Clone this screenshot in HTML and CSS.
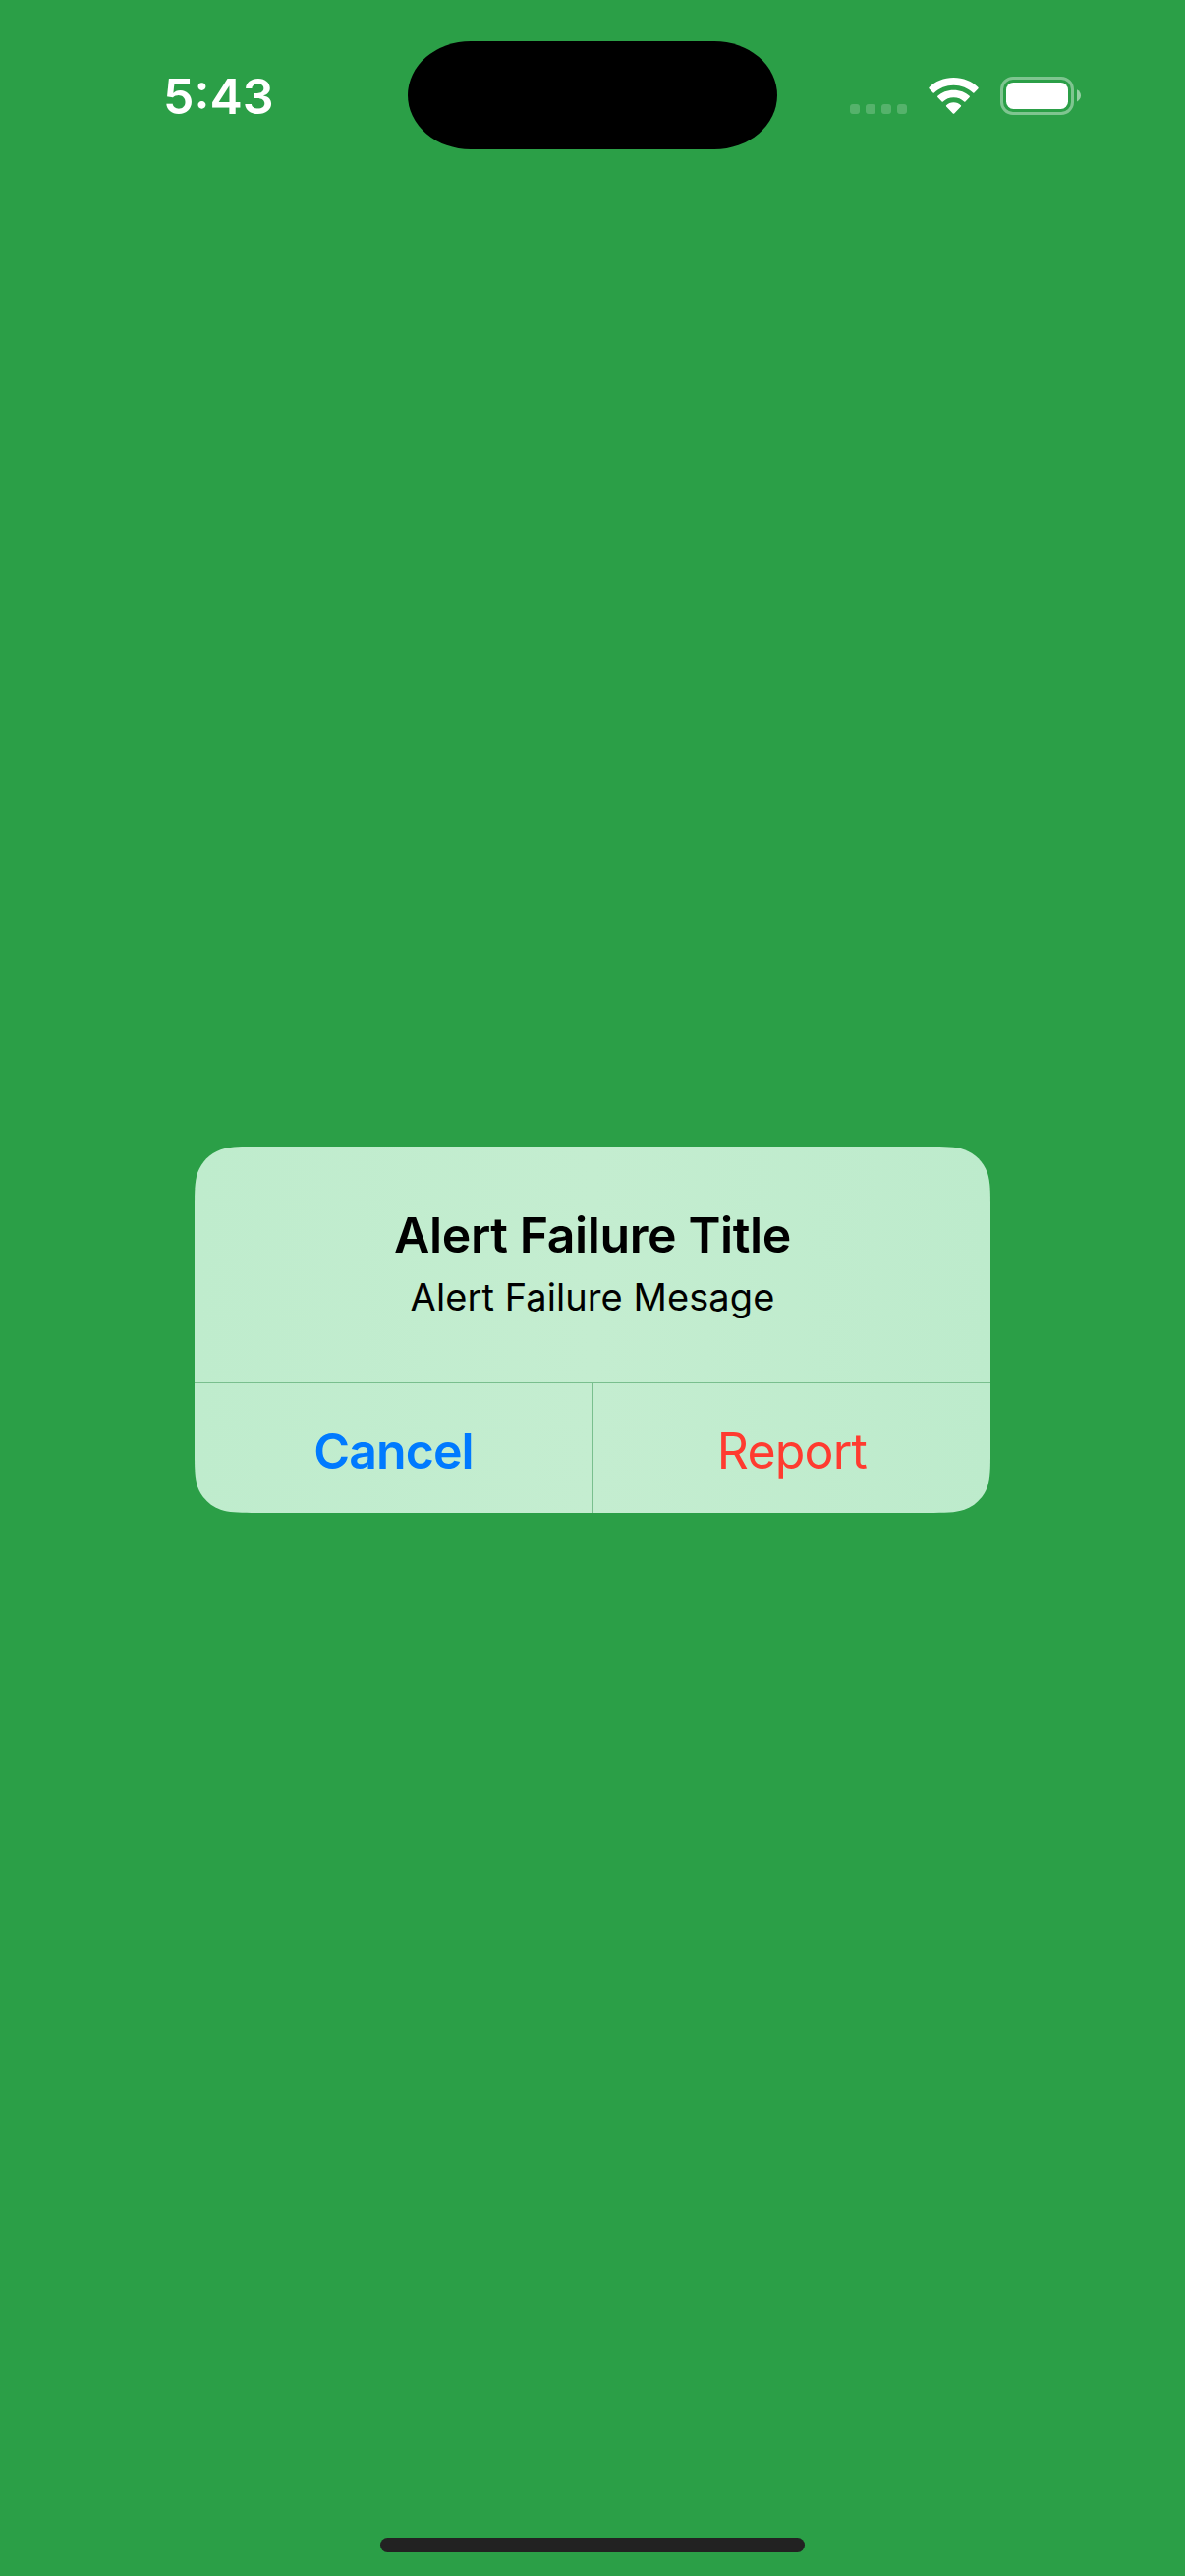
FILE: index.html
```html
<!DOCTYPE html>
<html lang="en">
<head>
<meta charset="utf-8">
<title>Alert</title>
<link rel="stylesheet" href="styles.css">
</head>
<body>
<div class="screen">
  <header class="status">
    <time class="clock">5:43</time>
    <div class="island"></div>
    <div class="indicators">
      <div class="signal"><i></i><i></i><i></i><i></i></div>
      <svg class="wifi" width="52" height="38" viewBox="0 0 52 38" fill="#fff">
        <path d="M25.500 0C35.400 0 44.300 3.800 50.500 10Q51 10.600 50.500 11.200L46.400 15.500Q45.800 16.100 45.200 15.500C40 10.700 33.100 7.700 25.500 7.700S11 10.700 5.800 15.500Q5.200 16.100 4.600 15.500L.5 11.200Q0 10.600 .5 10C6.700 3.800 15.600 0 25.500 0Z"/>
        <path d="M25.500 12.700C31.900 12.700 37.500 15 41.700 18.700Q42.300 19.300 41.700 19.900L37.400 24.400Q36.800 25 36.200 24.400C33.400 21.900 29.700 20.300 25.500 20.300S17.600 21.900 14.800 24.400Q14.200 25 13.600 24.400L9.300 19.900Q8.700 19.300 9.300 18.700C13.500 15 19.100 12.700 25.500 12.700Z"/>
        <path d="M25.500 25.300C28.400 25.300 31 26.400 32.900 28.200Q33.500 28.800 32.900 29.400L26.200 36.400Q25.500 37.100 24.800 36.400L18.100 29.400Q17.500 28.800 18.100 28.200C20 26.400 22.600 25.300 25.500 25.300Z"/>
      </svg>
      <svg class="battery" width="82" height="39" viewBox="0 0 82 39">
        <rect x="1.500" y="1.500" width="72" height="36" rx="11.500" fill="none" stroke="#fff" stroke-opacity=".4" stroke-width="3"/>
        <rect x="6" y="6" width="63" height="27" rx="7.500" fill="#fff"/>
        <path d="M78 13.200C80.500 14.300 82 16.700 82 19.300S80.500 24.300 78 25.400Z" fill="#fff" fill-opacity=".5"/>
      </svg>
    </div>
  </header>
  <main class="stage">
    <section class="alert" role="alertdialog">
      <div class="content">
        <h1 class="title">Alert Failure Title</h1>
        <p class="message">Alert Failure Mesage</p>
      </div>
      <div class="actions">
        <button class="action cancel">Cancel</button>
        <button class="action report">Report</button>
      </div>
    </section>
  </main>
  <div class="home"></div>
</div>
</body>
</html>
```
FILE: styles.css
```css
* { box-sizing: border-box; }
body { margin: 0; }
.screen {
  width: 1206px;
  height: 2622px;
  display: flex;
  flex-direction: column;
  align-items: center;
  background: #2b9f47;
  font-family: Inter, "Liberation Sans", sans-serif;
  overflow: hidden;
}
.status {
  width: 100%;
  height: 177px;
  flex: none;
  display: grid;
  grid-template-columns: 415px 376px 415px;
  align-items: start;
}
.clock {
  padding: 68px 0 0 166px;
  font-size: 50px;
  line-height: 60px;
  font-weight: 570;
  color: #fff;
  white-space: nowrap;
}
.island {
  height: 110px;
  margin-top: 42px;
  background: #000;
  border-radius: 64px / 55px;
}
.indicators {
  display: flex;
  align-items: flex-start;
  padding: 78px 0 0 74px;
}
.signal { display: flex; gap: 6px; margin: 28px 22px 0 0; }
.signal i { width: 10px; height: 10px; border-radius: 3px; background: rgba(255,255,255,.2); }
.wifi { margin: 1px 21px 0 0; overflow: visible; }
.stage {
  flex: 1;
  display: flex;
  flex-direction: column;
  padding-top: 990px;
}
.alert {
  width: 810px;
  height: 373px;
  display: flex;
  flex-direction: column;
  background: linear-gradient(90deg, #bfeccd, #c4edd0 50%, #bdebcc);
  clip-path: path("M0 64.200C0 45.720 0 36.470 3.150 26.520C7.100 15.660 15.660 7.100 26.520 3.150C36.470 0 45.720 0 64.200 0H745.800C764.280 0 773.530 0 783.480 3.150C794.340 7.100 802.900 15.660 806.850 26.520C810 36.470 810 45.720 810 64.200V308.800C810 327.280 810 336.530 806.850 346.480C802.900 357.340 794.340 365.900 783.480 369.850C773.530 373 764.280 373 745.800 373H64.200C45.720 373 36.470 373 26.520 369.850C15.660 365.900 7.100 357.340 3.150 346.480C0 336.530 0 327.280 0 308.800Z");
}
.content {
  height: 240px;
  padding-top: 60px;
  text-align: center;
  color: #000;
}
.title { margin: 0; font-size: 50px; line-height: 60px; font-weight: 600; letter-spacing: -0.4px; }
.message { margin: 9px 0 0; font-size: 38px; line-height: 48px; font-weight: 400; letter-spacing: 0.08px; }
.actions {
  height: 133px;
  display: grid;
  grid-template-columns: 405px 405px;
  border-top: 1px solid #79bf8e;
}
.action {
  border: 0;
  padding: 5px 0 0;
  background: none;
  font: 400 50px/60px Inter, "Liberation Sans", sans-serif;
}
.cancel { font-weight: 580; color: #007aff; letter-spacing: -0.9px; }
.report { border-left: 1px solid #79bf8e; color: #ff3b30; letter-spacing: -0.8px; }
.home {
  width: 432px;
  height: 15px;
  flex: none;
  margin-bottom: 24px;
  border-radius: 8px;
  background: #222;
}
```
